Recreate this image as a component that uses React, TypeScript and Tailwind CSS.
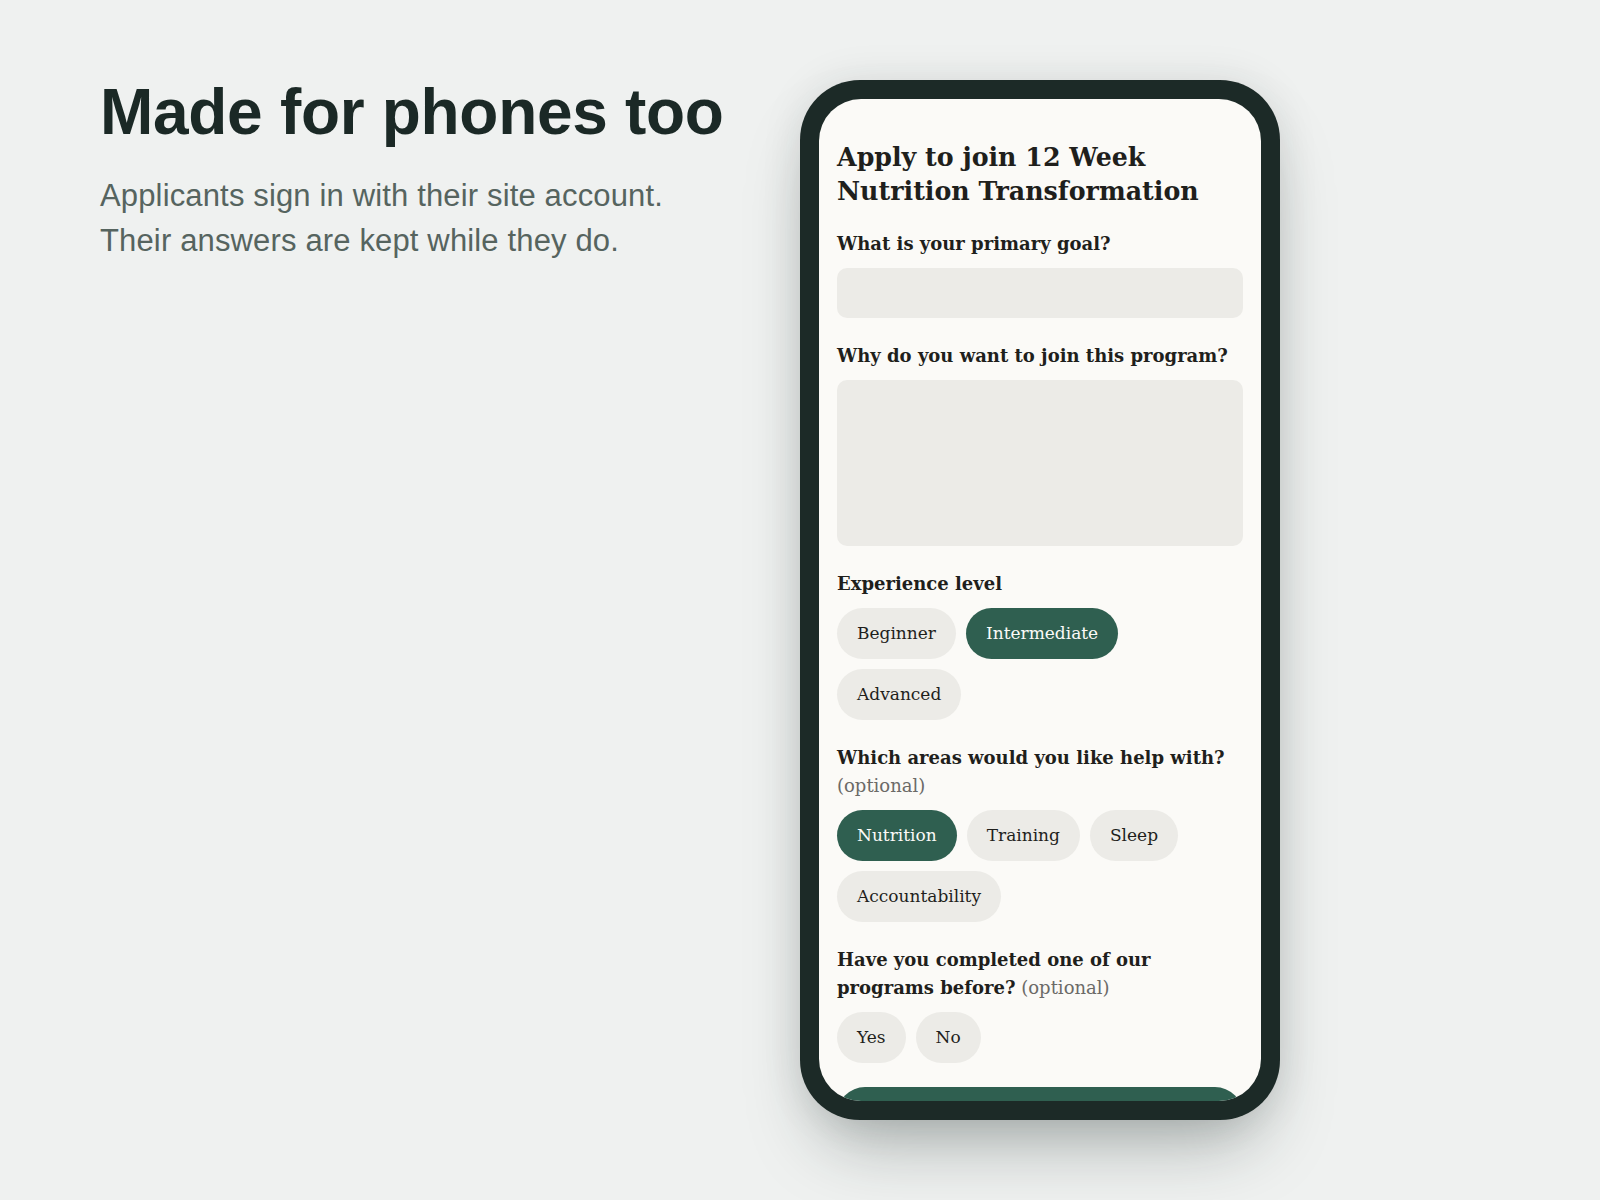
import { useState } from 'react';

const levels = ['Beginner', 'Intermediate', 'Advanced'];
const areas = ['Nutrition', 'Training', 'Sleep', 'Accountability'];
const yesNo = ['Yes', 'No'];

function Pills({
  options,
  selected,
  onToggle,
}: {
  options: string[];
  selected: string[];
  onToggle: (o: string) => void;
}) {
  return (
    <div className="mt-[10px] flex flex-wrap gap-[10px]">
      {options.map((o) => {
        const on = selected.includes(o);
        return (
          <button
            key={o}
            type="button"
            onClick={() => onToggle(o)}
            className={
              on
                ? 'h-[51px] px-[20px] rounded-full bg-[#2f5f50] text-[#fbfaf7] text-[17px]'
                : 'h-[51px] px-[20px] rounded-full bg-[#ecebe7] text-[#1f1f1c] text-[17px]'
            }
          >
            {o}
          </button>
        );
      })}
    </div>
  );
}

function Label({ children, optional }: { children: React.ReactNode; optional?: boolean }) {
  return (
    <div className="text-[18px] leading-[28px] font-bold text-[#1f1f1c]">
      {children}
      {optional && <span className="font-normal text-[#6b6a67]"> (optional)</span>}
    </div>
  );
}

function PhoneForm() {
  const [level, setLevel] = useState<string[]>(['Intermediate']);
  const [help, setHelp] = useState<string[]>(['Nutrition']);
  const [before, setBefore] = useState<string[]>([]);

  return (
    <div className="w-[480px] h-[1040px] shrink-0 rounded-[60px] bg-[#1c2a27] p-[19px] shadow-[0_40px_70px_-20px_rgba(28,42,39,0.35),0_0_40px_rgba(28,42,39,0.1)]">
      <div className="h-full rounded-[42px] bg-[#fbfaf7] overflow-hidden px-[18px] pt-[41px] font-['DejaVu_Serif','Liberation_Serif',serif] text-[#1f1f1c]">
        <h2 className="text-[25.3px] leading-[34px] font-bold">
          Apply to join 12 Week Nutrition Transformation
        </h2>

        <div className="mt-[22px] flex flex-col gap-[24px]">
          <div>
            <Label>What is your primary goal?</Label>
            <input className="mt-[10px] block w-full h-[50px] rounded-[10px] bg-[#ecebe7] px-4 outline-none" />
          </div>

          <div>
            <Label>Why do you want to join this program?</Label>
            <textarea className="mt-[10px] block w-full h-[166px] rounded-[10px] bg-[#ecebe7] p-4 outline-none resize-none" />
          </div>

          <div>
            <Label>Experience level</Label>
            <Pills options={levels} selected={level} onToggle={(o) => setLevel([o])} />
          </div>

          <div>
            <Label optional>Which areas would you like help with?</Label>
            <Pills
              options={areas}
              selected={help}
              onToggle={(o) =>
                setHelp((h) => (h.includes(o) ? h.filter((x) => x !== o) : [...h, o]))
              }
            />
          </div>

          <div>
            <Label optional>Have you completed one of our programs before?</Label>
            <Pills options={yesNo} selected={before} onToggle={(o) => setBefore([o])} />
          </div>

          <button
            type="button"
            className="h-[56px] w-full rounded-full bg-[#2f5f50] text-[#fbfaf7] text-[17px] font-bold"
          >
            Submit application
          </button>
        </div>
      </div>
    </div>
  );
}

export default function App() {
  return (
    <div className="min-h-screen bg-[#eff1f0] font-['Liberation_Sans',Arial,sans-serif]">
      <div className="flex items-start px-[100px] pt-[80px] pb-[80px]">
        <div className="w-[700px] shrink-0">
          <h1 className="text-[64px] leading-none font-bold tracking-[-0.3px] text-[#1b2926]">
            Made for phones too
          </h1>
          <p className="mt-[29px] max-w-[580px] text-[31px] leading-[45px] tracking-[0.15px] text-[#56645f]">
            Applicants sign in with their site account. Their answers are kept while they do.
          </p>
        </div>
        <PhoneForm />
      </div>
    </div>
  );
}
